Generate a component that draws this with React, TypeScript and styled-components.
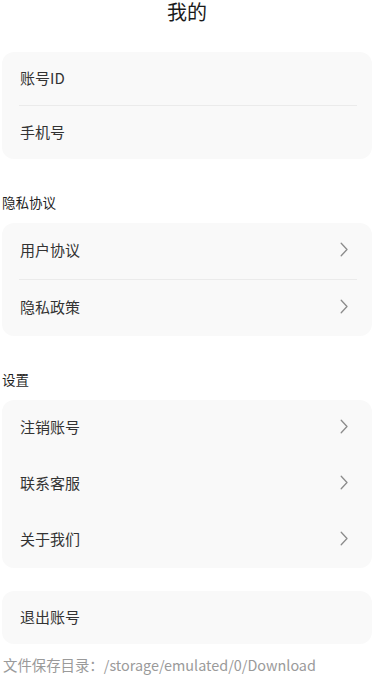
import styled, { createGlobalStyle } from "styled-components";

const GlobalStyle = createGlobalStyle`
  html, body {
    margin: 0;
    padding: 0;
    background: #ffffff;
  }
  body {
    font-family: "Noto Sans CJK SC", "Noto Sans", sans-serif;
    color: #333333;
  }
`;

const Page = styled.div`
  display: flex;
  flex-direction: column;
  padding: 0 10px 0 2px;
`;

const Title = styled.h1`
  margin: 0 0 28px;
  height: 24px;
  font-size: 20px;
  line-height: 24px;
  font-weight: 400;
  color: #1a1a1a;
  text-align: center;
`;

const SectionLabel = styled.div`
  margin: 34px 0 12px;
  font-size: 13.5px;
  line-height: 18px;
  color: #1f1f1f;
`;

const Card = styled.div<{ $gap?: number }>`
  display: flex;
  flex-direction: column;
  background: #f9f9f9;
  border-radius: 12px;
  margin-top: ${(p) => p.$gap ?? 0}px;
`;

const Row = styled.div<{ $height: number }>`
  display: flex;
  align-items: center;
  justify-content: space-between;
  box-sizing: border-box;
  height: ${(p) => p.$height}px;
  padding: 0 24px 3px 18px;
  font-size: 15px;
  color: #333333;
`;

const Divider = styled.div`
  height: 1px;
  margin: 0 15px 0 17px;
  background: #ebebeb;
`;

const Footer = styled.div`
  margin-top: 11px;
  padding-left: 1px;
  font-size: 14.4px;
  line-height: 20px;
  color: #9a9a9a;
  white-space: nowrap;
`;

const Chevron = () => (
  <svg width="8" height="15" viewBox="0 0 8 15" fill="none">
    <polyline
      points="1.2,1.2 7,7.5 1.2,13.8"
      stroke="#8c8c8c"
      strokeWidth="1.3"
      strokeLinecap="round"
      strokeLinejoin="round"
    />
  </svg>
);

interface MenuItem {
  label: string;
}

const MenuCard = ({
  items,
  height,
  divided,
  arrow,
  gap,
}: {
  items: MenuItem[];
  height: number;
  divided?: boolean;
  arrow?: boolean;
  gap?: number;
}) => (
  <Card $gap={gap}>
    {items.map((item, i) => (
      <div key={item.label}>
        {divided && i > 0 && <Divider />}
        <Row $height={height}>
          <span>{item.label}</span>
          {arrow && <Chevron />}
        </Row>
      </div>
    ))}
  </Card>
);

export default function App() {
  return (
    <Page>
      <GlobalStyle />
      <Title>我的</Title>
      <MenuCard items={[{ label: "账号ID" }, { label: "手机号" }]} height={53} divided />

      <SectionLabel>隐私协议</SectionLabel>
      <MenuCard
        items={[{ label: "用户协议" }, { label: "隐私政策" }]}
        height={56}
        divided
        arrow
      />

      <SectionLabel>设置</SectionLabel>
      <MenuCard
        items={[{ label: "注销账号" }, { label: "联系客服" }, { label: "关于我们" }]}
        height={56}
        arrow
      />

      <MenuCard items={[{ label: "退出账号" }]} height={53} gap={23} />

      <Footer>文件保存目录：/storage/emulated/0/Download</Footer>
    </Page>
  );
}
